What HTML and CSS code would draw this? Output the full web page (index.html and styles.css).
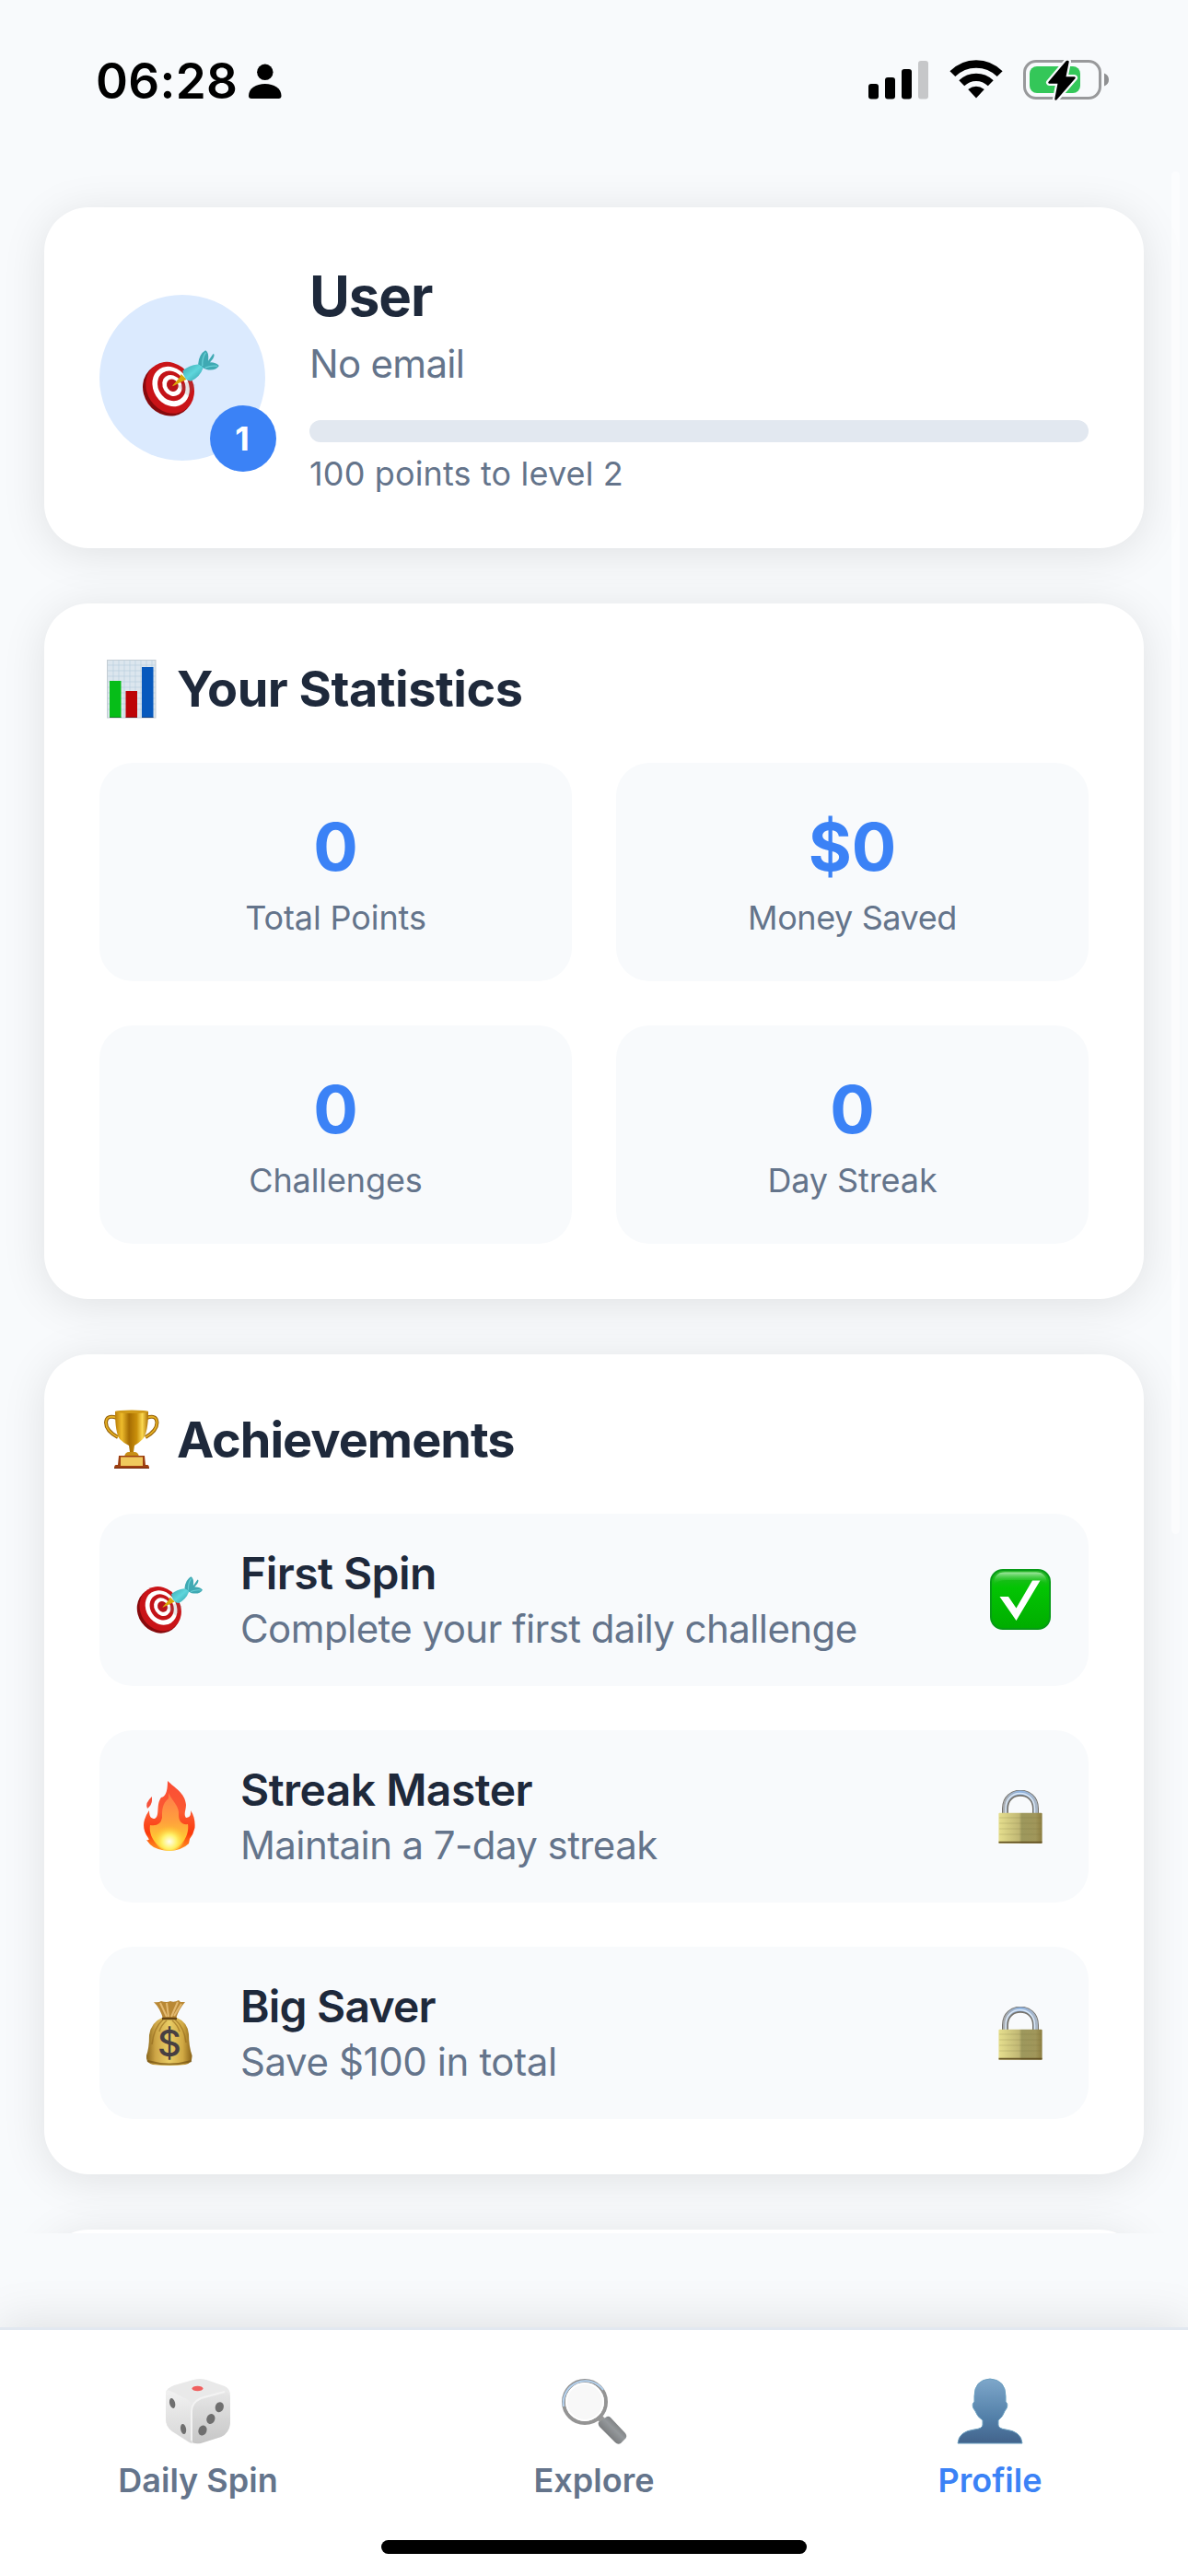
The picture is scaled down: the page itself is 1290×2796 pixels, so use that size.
FILE: index.html
```
<!DOCTYPE html>
<html lang="en">
<head>
    <meta charset="UTF-8">
    <meta name="viewport" content="width=device-width, initial-scale=1.0">
    <title>Profile</title>
    <link rel="stylesheet" href="styles.css">
</head>
<body>
    <!-- Shared icons -->
    <svg class="sprite" aria-hidden="true">
        <defs>
            <linearGradient id="dartBlue" x1="0" y1="0" x2="1" y2="1">
                <stop offset="0" stop-color="#3aa9b2"/>
                <stop offset=".5" stop-color="#5fd6dc"/>
                <stop offset="1" stop-color="#2e9aa6"/>
            </linearGradient>
            <linearGradient id="brass" x1="0" x2="1">
                <stop offset="0" stop-color="#e6df8e"/>
                <stop offset=".47" stop-color="#c0b774"/>
                <stop offset=".53" stop-color="#9d985d"/>
                <stop offset=".85" stop-color="#a0965a"/>
                <stop offset="1" stop-color="#8c7d40"/>
            </linearGradient>
            <linearGradient id="steel" x1="0" x2="1">
                <stop offset="0" stop-color="#a9acb0"/>
                <stop offset=".5" stop-color="#8fb4e2"/>
                <stop offset="1" stop-color="#a9b6c6"/>
            </linearGradient>
        </defs>
        <symbol id="target" viewBox="28 25 250 215">
            <ellipse cx="112" cy="154" rx="78" ry="88" transform="rotate(-35 112 154)" fill="#860a0d"/>
            <ellipse cx="119" cy="147" rx="75" ry="87" transform="rotate(-33 119 147)" fill="#c91418"/>
            <ellipse cx="122" cy="143" rx="57" ry="68" transform="rotate(-33 122 143)" fill="#fff"/>
            <ellipse cx="124" cy="141" rx="43" ry="51" transform="rotate(-33 124 141)" fill="#c31318"/>
            <ellipse cx="126" cy="140" rx="30" ry="36" transform="rotate(-33 126 140)" fill="#fff"/>
            <ellipse cx="127" cy="139" rx="18" ry="21" transform="rotate(-33 127 139)" fill="#b8141a"/>
            <path d="M142 142l40-18 18 14-20 38z" fill="#777" opacity=".18"/>
            <path d="M127 140l24-27 4-10 18 17-13 6-32 16z" fill="#d9a70a"/>
            <path d="M210 71Q213 38 234 26Q246 32 243 60L259 37Q266 38 258 53L248 65Q267 64 278 76Q266 94 237 88L224 82z" fill="#3fa9b3"/>
            <path d="M160 92Q180 74 209 71L224 78L226 84Q216 112 187 126Q165 125 160 92z" fill="url(#dartBlue)"/>
            <path d="M224 76Q223 49 235 33M233 82Q254 74 272 77" fill="none" stroke="#68cfd6" stroke-width="4"/>
        </symbol>
        <symbol id="lock" viewBox="0 0 48 58">
            <path d="M7.500 27V20C7.500-2.500 40.500-2.500 40.500 20V27" fill="none" stroke="#74716a" stroke-width="7"/>
            <path d="M7.300 27V20C7.300-3 40.700-3 40.700 20V27" fill="none" stroke="url(#steel)" stroke-width="4.600"/>
            <path d="M8 27V20C8-2 39-2 39.500 20V27" fill="none" stroke="#d9e8f8" stroke-width="1.400"/>
            <rect x=".4" y="24.700" width="47.200" height="33" rx="1" fill="url(#brass)"/>
            <path d="M1 30H47M1 36H47M1 42H47M1 48H47" stroke="#716b3d" stroke-width=".6" opacity=".35"/>
            <path d="M.5 56.700H47.500" stroke="#625022" stroke-width="1.800"/>
        </symbol>
    </svg>

    <header class="status-bar">
        <div class="status-left">
            <span class="time">06:28</span>
            <svg class="person" viewBox="0 0 36 38"><circle cx="17.800" cy="9.300" r="8.700"/><path d="M0 35C0 27 8 22 17.800 22S35.500 27 35.500 35Q35.500 38 32.500 38H3Q0 38 0 35z"/></svg>
        </div>
        <div class="status-right">
            <svg class="signal" viewBox="0 0 65 42">
                <rect y="25" width="11" height="16.500" rx="3"/>
                <rect x="18" y="18" width="11" height="23.500" rx="3"/>
                <rect x="36" y="9" width="11" height="32.500" rx="3"/>
                <rect x="54" width="11" height="41.500" rx="3" fill="#c6c7c9"/>
            </svg>
            <svg class="wifi" viewBox="0 0 58 42">
                <path d="M.4 12.300Q12.500.2 29 .2T57.600 12.300L51.700 18Q42 8.800 29 8.800T6.300 18z"/>
                <path d="M10.300 22.200Q18.500 14.800 29 14.800T47.700 22.200L41.800 28.200Q36 22.900 29 22.900T16.200 28.200z"/>
                <path d="M20.200 32Q28.900 25.500 37.800 32L29 41.500z"/>
            </svg>
            <svg class="battery" viewBox="0 0 94 46">
                <rect x="1.500" y="3.500" width="82" height="40" rx="12.500" fill="none" stroke="#98999b" stroke-width="3"/>
                <path d="M88 16.500Q93 18.500 93 23.500T88 30.500z" fill="#8f9092"/>
                <rect x="7" y="9" width="55" height="29" rx="8" fill="#34c759"/>
                <path d="M47.500 4L28.500 26.500H39L35.500 44.500L55.500 21.500H45L48.500 4z" fill="#000" stroke="#f8fafc" stroke-width="7" stroke-linejoin="round"/>
                <path d="M47.500 4L28.500 26.500H39L35.500 44.500L55.500 21.500H45L48.500 4z" stroke="#000" stroke-width="2.500" stroke-linejoin="round"/>
            </svg>
        </div>
    </header>

    <main class="content">
        <section class="card profile">
            <div class="avatar">
                <svg class="avatar-icon"><use href="#target"/></svg>
                <span class="level">1</span>
            </div>
            <div class="profile-info">
                <h1>User</h1>
                <p class="email">No email</p>
                <div class="progress"></div>
                <p class="progress-text">100 points to level 2</p>
            </div>
        </section>

        <section class="card">
            <h2>
                <svg class="title-icon" viewBox="0 0 69 65">
                    <rect x="8.500" y="1.500" width="52.500" height="62.500" fill="#dce6ee" stroke="#c3ccd3"/>
                    <path d="M9 7H61M9 13H61M9 19H61M9 25H61M9 31H61M9 37H61M9 43H61M9 49H61M9 55H61M15 1V64M21 1V64M27 1V64M33 1V64M39 1V64M45 1V64M51 1V64M57 1V64" stroke="#b9cede" stroke-width=".7"/>
                    <rect x="11" y="24" width="12.500" height="40" fill="#06bd18"/>
                    <rect x="28.500" y="35" width="12.500" height="29" fill="#bd0407"/>
                    <rect x="46" y="9" width="12.500" height="55" fill="#0759bd"/>
                    <path d="M11 63.500H23.500M28.500 63.500H41M46 63.500H58.500" stroke="#223" opacity=".4"/>
                </svg>
                <span class="title-stats">Your Statistics</span>
            </h2>
            <div class="stats">
                <div class="stat"><strong>0</strong><span>Total Points</span></div>
                <div class="stat"><strong>$0</strong><span class="l-saved">Money Saved</span></div>
                <div class="stat"><strong>0</strong><span>Challenges</span></div>
                <div class="stat"><strong>0</strong><span>Day Streak</span></div>
            </div>
        </section>

        <section class="card">
            <h2>
                <svg class="title-icon" viewBox="0 0 69 65">
                    <defs>
                        <linearGradient id="gold" x1="0" x2="1">
                            <stop offset="0" stop-color="#b97d08"/><stop offset=".2" stop-color="#eebc2c"/>
                            <stop offset=".42" stop-color="#a56c03"/><stop offset=".65" stop-color="#c98f0b"/>
                            <stop offset=".82" stop-color="#fbd850"/><stop offset="1" stop-color="#ab7004"/>
                        </linearGradient>
                    </defs>
                    <path d="M19 9Q7.500 5 7 14Q7 23 20 30M51 9Q62 5 62.500 14Q62.500 23 50 30" fill="none" stroke="#966209" stroke-width="4"/>
                    <path d="M19 9Q7.500 5 7 14Q7 23 20 30M51 9Q62 5 62.500 14Q62.500 23 50 30" fill="none" stroke="#e5b024" stroke-width="1.800"/>
                    <path d="M17 2H53Q53 25 47 32Q42 37 38 39L37 46L42 51H28L33 46L32 39Q27 37 22 32Q17 25 17 2z" fill="url(#gold)"/>
                    <ellipse cx="35" cy="2.200" rx="18" ry="1.700" fill="#d09a18"/>
                    <path d="M27 51Q28 46 32 46H38Q42 46 43 51z" fill="#c88f15"/>
                    <path d="M21 50H49L50 60H52Q54 60 54 64H16Q16 60 18 60H20z" fill="#9d3f10"/>
                    <rect x="23" y="51.500" width="24" height="9.500" fill="#f0c95d"/>
                    <path d="M16 63.500H54" stroke="#74270a"/>
                </svg>
                <span class="title-achievements">Achievements</span>
            </h2>
            <div class="achievements">
                <div class="achievement">
                    <div class="achievement-icon"><svg class="icon-target"><use href="#target"/></svg></div>
                    <div class="achievement-info">
                        <h3 class="t-first">First Spin</h3>
                        <p class="d-first">Complete your first daily challenge</p>
                    </div>
                    <div class="achievement-state">
                        <svg class="icon-check" viewBox="0 0 66 66">
                            <defs>
                                <linearGradient id="green" x2="0" y2="1"><stop offset="0" stop-color="#2fb52f"/><stop offset=".3" stop-color="#03c403"/><stop offset="1" stop-color="#00ad00"/></linearGradient>
                                <linearGradient id="shine" x2="0" y2="1"><stop offset="0" stop-color="#a2e8a2"/><stop offset="1" stop-color="#10c410" stop-opacity="0"/></linearGradient>
                            </defs>
                            <rect x="1" y="1" width="64" height="64" rx="13" fill="url(#green)" stroke="#079a17" stroke-width="2"/>
                            <path d="M4 17Q4 3.500 16 3.500H50Q62 3.500 62 17Q56 12 48 12H18Q9 12 4 17z" fill="url(#shine)"/>
                            <path d="M10.500 30H20L28.500 42.500L46 12.500H54.500L28.500 56z" fill="#fff"/>
                        </svg>
                    </div>
                </div>
                <div class="achievement">
                    <div class="achievement-icon">
                        <svg class="icon-fire" viewBox="0 0 56 76">
                            <defs>
                                <linearGradient id="flame" x2="0" y2="1"><stop offset="0" stop-color="#fb4d35"/><stop offset=".45" stop-color="#fb5a32"/><stop offset=".75" stop-color="#fb3a0c"/><stop offset="1" stop-color="#ff9c20"/></linearGradient>
                                <linearGradient id="flameMid" x2="0" y2="1"><stop offset="0" stop-color="#ff7a4b"/><stop offset=".5" stop-color="#ffa13c"/><stop offset="1" stop-color="#ffe02d"/></linearGradient>
                                <radialGradient id="flameCore" cy=".7"><stop offset="0" stop-color="#fffdf0"/><stop offset=".45" stop-color="#fff26a"/><stop offset="1" stop-color="#ffc92e" stop-opacity="0"/></radialGradient>
                            </defs>
                            <path d="M26 0C33 7 45 13 46 26C46 32 43 36 46 40Q52 40 51 32C55 38 56 44 55.500 51Q54 58 50 63L49 68Q42 75 28 76Q13 75 7 69L3 64Q7 65 5 62C0 55-1 48 1 42Q3 36 6 32C6 39 8 41 12 41C18 38 13 26 19 18Q26 17 26 0z" fill="url(#flame)"/>
                            <path d="M9 17V21Q9 26 4 30Q1 24 9 17z" fill="#f6513a"/>
                            <path d="M27 13C31 22 39 27 38 37C38 44 42 48 48 47C50 58 42 73 28 75C14 73 5 60 7 48Q18 50 20 40C20 31 20 25 27 19z" fill="url(#flameMid)"/>
                            <ellipse cx="28" cy="59" rx="18" ry="17" fill="url(#flameCore)"/>
                        </svg>
                    </div>
                    <div class="achievement-info">
                        <h3 class="t-streak">Streak Master</h3>
                        <p class="d-streak">Maintain a 7-day streak</p>
                    </div>
                    <div class="achievement-state"><svg class="icon-lock"><use href="#lock"/></svg></div>
                </div>
                <div class="achievement">
                    <div class="achievement-icon">
                        <svg class="icon-bag" viewBox="0 0 50 71">
                            <defs>
                                <linearGradient id="bag" x1="0" x2="1"><stop offset="0" stop-color="#8a661c"/><stop offset=".2" stop-color="#cda546"/><stop offset=".5" stop-color="#e9cd65"/><stop offset=".8" stop-color="#d0a843"/><stop offset="1" stop-color="#886116"/></linearGradient>
                            </defs>
                            <path d="M8 2Q13 3 16 1Q22 3 26 1Q30 3 35 0L37 2L42 2Q35 10 32 20H18Q15 9 8 2z" fill="#b98835"/>
                            <path d="M15 3L22 18M22 3L24 18M34 2L27 18M38 4L30 17" stroke="#e3b970" stroke-width="2"/>
                            <path d="M17 19H33Q45 24 46 37Q46 50 49.500 60Q50 69 42 70Q25 72 7 70Q-1 68 0 60Q3 52 3 38Q5 24 17 19z" fill="url(#bag)"/>
                            <path d="M18 21Q8 30 6 48M22 22Q16 27 14 34M31 21Q41 29 43 46M28 22Q34 27 36 34" fill="none" stroke="#93691d" stroke-width="1.600" opacity=".6"/>
                            <path d="M17 20H33" stroke="#644211" stroke-width="2.500"/>
                            <path d="M1 66Q25 73 49 66" fill="none" stroke="#765313" stroke-width="2" opacity=".7"/>
                            <text x="25" y="61" text-anchor="middle">$</text>
                        </svg>
                    </div>
                    <div class="achievement-info">
                        <h3 class="t-saver">Big Saver</h3>
                        <p class="d-saver">Save $100 in total</p>
                    </div>
                    <div class="achievement-state"><svg class="icon-lock"><use href="#lock"/></svg></div>
                </div>
            </div>
        </section>

        <section class="card"></section>
        <div class="scrollbar"></div>
    </main>

    <nav class="tab-bar">
        <div class="tabs">
            <a class="tab">
                <svg viewBox="0 0 72 72">
                    <defs>
                        <linearGradient id="dieL" x2="0" y2="1"><stop offset="0" stop-color="#f1f1f1"/><stop offset="1" stop-color="#d6d6d6"/></linearGradient>
                        <linearGradient id="dieR" x2="0" y2="1"><stop offset="0" stop-color="#e6e6e6"/><stop offset="1" stop-color="#c6c6c6"/></linearGradient>
                    </defs>
                    <path d="M1 16Q2 11 10 8L31 2Q38 0 45 2L65 9Q71 12 71 19V49Q70 60 61 64L37 71Q31 72 26 70L8 58Q1 53 1 45z" fill="#e9e9e9"/>
                    <path d="M1 15Q2 12 8 15L24 23Q29 26 29 34V71L8 58Q1 53 1 44z" fill="url(#dieL)"/>
                    <path d="M29 37Q30 26 40 23L63 16Q71 14 71 22V49Q70 60 61 64L39 71Q34 72 30 70z" fill="url(#dieR)"/>
                    <path d="M29 68V36Q29 27 39 22L65 15" fill="none" stroke="#f3f3f3" stroke-width="2"/>
                    <ellipse cx="35.500" cy="11.500" rx="6" ry="2.800" fill="#f0605f"/>
                    <g fill="#6f6f6f">
                        <ellipse cx="8" cy="27.500" rx="3" ry="5.600" transform="rotate(-14 8 27)"/>
                        <ellipse cx="20" cy="55.500" rx="3" ry="5.600" transform="rotate(-10 20 55)"/>
                        <ellipse cx="59.500" cy="31.500" rx="4.500" ry="5.600" transform="rotate(20 59 31)"/>
                        <ellipse cx="50" cy="44.500" rx="4.500" ry="5.600" transform="rotate(20 50 44)"/>
                        <ellipse cx="41" cy="57" rx="4.500" ry="5.600" transform="rotate(20 41 57)"/>
                    </g>
                </svg>
                <span class="l-spin">Daily Spin</span>
            </a>
            <a class="tab">
                <svg viewBox="0 0 72 72">
                    <defs><linearGradient id="handle" x1="0" y1="1" x2="1" y2="0"><stop offset="0" stop-color="#555"/><stop offset=".55" stop-color="#94989b"/><stop offset="1" stop-color="#555"/></linearGradient></defs>
                    <path d="M42 43L50 51" stroke="#999" stroke-width="7"/>
                    <circle cx="26" cy="26" r="23" fill="#f8f8f8" stroke="#949494" stroke-width="4"/>
                    <path d="M3 31A24 24 0 0 1 46 13" fill="none" stroke="#b4d2ef" stroke-width="2"/>
                    <circle cx="26" cy="26" r="20" fill="none" stroke="#fff" stroke-width="2"/>
                    <path d="M41 48L50 42Q52 41 54 43L70 60Q73 64 69 67L65 71Q62 73 59 70L42 53Q40 50 41 48z" fill="url(#handle)"/>
                </svg>
                <span class="l-explore">Explore</span>
            </a>
            <a class="tab active">
                <svg viewBox="0 0 72 72">
                    <defs><linearGradient id="bust" x2="0" y2="1"><stop offset="0" stop-color="#7ea7ca"/><stop offset=".6" stop-color="#5380a9"/><stop offset="1" stop-color="#42638b"/></linearGradient></defs>
                    <path d="M36 1Q53 2 53 20V26Q56 28 54 33L52 36Q50 42 45 46V51Q45 55 53 56Q70 58 71 71H1Q2 58 19 56Q28 55 28 51V46Q22 42 20 36L18 33Q16 28 19 26V20Q19 2 36 1z" fill="url(#bust)" stroke="#6b9fc0"/>
                </svg>
                <span class="l-profile">Profile</span>
            </a>
        </div>
        <div class="home-indicator"></div>
    </nav>
</body>
</html>
```
FILE: styles.css
```
* {
    box-sizing: border-box;
    margin: 0;
    padding: 0;
}
body {
    width: 1290px;
    height: 2796px;
    display: flex;
    flex-direction: column;
    overflow: hidden;
    background: #f8fafc;
    color: #1e293b;
    font-family: Inter, "Liberation Sans", sans-serif;
}
svg {
    display: block;
    flex-shrink: 0;
}
.sprite {
    position: absolute;
    width: 0;
    height: 0;
}

/* Status bar */
.status-bar {
    height: 177px;
    padding: 0 85px 0 104px;
    display: flex;
    justify-content: space-between;
    align-items: flex-start;
    color: #000;
}
.status-left {
    display: flex;
    padding-top: 56px;
}
.time {
    width: 166px;
    font-size: 53px;
    line-height: 64px;
    font-weight: 600;
    letter-spacing: 0.3px;
}
.person {
    width: 36px;
    height: 38px;
    margin-top: 13px;
}
.status-right {
    display: flex;
    padding-top: 62px;
}
.signal {
    width: 65px;
    height: 42px;
    margin: 4px 23px 0 0;
}
.wifi {
    width: 58px;
    height: 42px;
    margin: 3px 22px 0 0;
}
.battery {
    width: 94px;
    height: 46px;
    margin-top: 1px;
}

/* Scrolling content */
.content {
    position: relative;
    height: 2247px;
    padding: 48px;
    display: flex;
    flex-direction: column;
    gap: 60px;
    overflow: hidden;
}
.card {
    flex-shrink: 0;
    min-height: 300px;
    padding: 60px;
    background: #fff;
    border-radius: 48px;
    box-shadow: 0 6px 48px rgba(0, 0, 0, 0.1);
}
.scrollbar {
    position: absolute;
    top: 9px;
    right: 9px;
    width: 9px;
    height: 1479px;
    border-radius: 5px;
    background: rgba(255, 255, 255, 0.5);
}

/* Profile card */
.profile {
    height: 370px;
    display: flex;
    align-items: center;
    gap: 48px;
}
.avatar {
    position: relative;
    width: 180px;
    height: 180px;
    display: flex;
    align-items: center;
    justify-content: center;
    border-radius: 50%;
    background: #dbeafe;
}
.avatar-icon {
    width: 84px;
    height: 72px;
    margin: 12px 4px 0 0;
}
.level {
    position: absolute;
    right: -12px;
    bottom: -12px;
    width: 72px;
    height: 72px;
    padding-right: 2px;
    border-radius: 50%;
    background: #3b82f6;
    color: #fff;
    font-size: 36px;
    font-weight: 700;
    line-height: 73px;
    text-align: center;
}
.profile-info {
    flex: 1;
}
h1 {
    font-size: 60px;
    line-height: 72px;
    font-weight: 700;
    letter-spacing: -1.1px;
}
.email {
    margin-top: 12px;
    font-size: 42px;
    line-height: 51px;
    letter-spacing: -0.7px;
    color: #64748b;
}
.progress {
    height: 24px;
    margin: 36px 0 12px;
    border-radius: 12px;
    background: #e2e8f0;
}
.progress-text {
    font-size: 36px;
    line-height: 45px;
    letter-spacing: 0.15px;
    margin-bottom: -2px;
    color: #64748b;
}

/* Statistics */
h2 {
    height: 65px;
    margin-bottom: 48px;
    display: flex;
    gap: 15px;
    font-size: 54px;
    line-height: 65px;
    font-weight: 700;
    letter-spacing: -1px;
}
.title-stats {
    letter-spacing: -0.5px;
}
.title-icon {
    width: 69px;
    height: 65px;
}
.stats {
    display: grid;
    grid-template-columns: 1fr 1fr;
    gap: 48px;
}
.stat {
    height: 237px;
    padding: 48px;
    display: flex;
    flex-direction: column;
    align-items: center;
    gap: 12px;
    border-radius: 36px;
    background: #f8fafc;
}
.stat strong {
    font-size: 72px;
    line-height: 86px;
    font-weight: 700;
    color: #3b82f6;
}
.stat span {
    font-size: 36px;
    line-height: 45px;
    letter-spacing: -0.1px;
    color: #64748b;
}
.stat .l-saved {
    letter-spacing: -0.4px;
}

/* Achievements */
.achievements {
    display: flex;
    flex-direction: column;
    gap: 48px;
}
.achievement {
    height: 187px;
    padding: 36px;
    display: flex;
    align-items: center;
    border-radius: 36px;
    background: #f8fafc;
}
.achievement-icon {
    width: 80px;
    display: flex;
    justify-content: center;
}
.icon-target {
    width: 72px;
    height: 62px;
    margin-top: 10px;
}
.icon-fire {
    width: 56px;
    height: 76px;
    margin-top: -2px;
}
.icon-bag {
    width: 50px;
    height: 71px;
    margin-top: -1px;
}
.icon-bag text {
    font-family: Inter, sans-serif;
    font-size: 40px;
    font-weight: 500;
    fill: #473f42;
}
.achievement-info {
    flex: 1;
    padding-left: 37px;
}
.achievement-state {
    width: 76px;
    display: flex;
    justify-content: center;
}
.icon-check {
    width: 66px;
    height: 66px;
    margin-bottom: 1px;
}
.icon-lock {
    width: 48px;
    height: 58px;
}
h3 {
    margin-bottom: 6px;
    font-size: 48px;
    line-height: 57px;
    font-weight: 600;
    letter-spacing: -0.55px;
}
.achievement-info p {
    font-size: 42px;
    line-height: 52px;
    letter-spacing: -0.58px;
    color: #64748b;
}
.t-saver {
    letter-spacing: -0.8px;
}
.achievement-info .d-saver {
    letter-spacing: -0.4px;
}

/* Tab bar */
.tab-bar {
    height: 270px;
    margin-top: 102px;
    border-top: 3px solid #e2e8f0;
    background: #fff;
    box-shadow: 0 -6px 48px rgba(0, 0, 0, 0.1);
}
.tabs {
    height: 228px;
    padding-top: 52px;
    display: flex;
}
.tab {
    flex: 1;
    display: flex;
    flex-direction: column;
    align-items: center;
    gap: 18px;
    font-size: 36px;
    line-height: 43px;
    font-weight: 600;
    color: #64748b;
}
.tab svg {
    width: 72px;
    height: 72px;
}
.tab.active {
    color: #3b82f6;
}
.home-indicator {
    width: 462px;
    height: 15px;
    margin: 0 auto;
    border-radius: 8px;
    background: #000;
}
```
